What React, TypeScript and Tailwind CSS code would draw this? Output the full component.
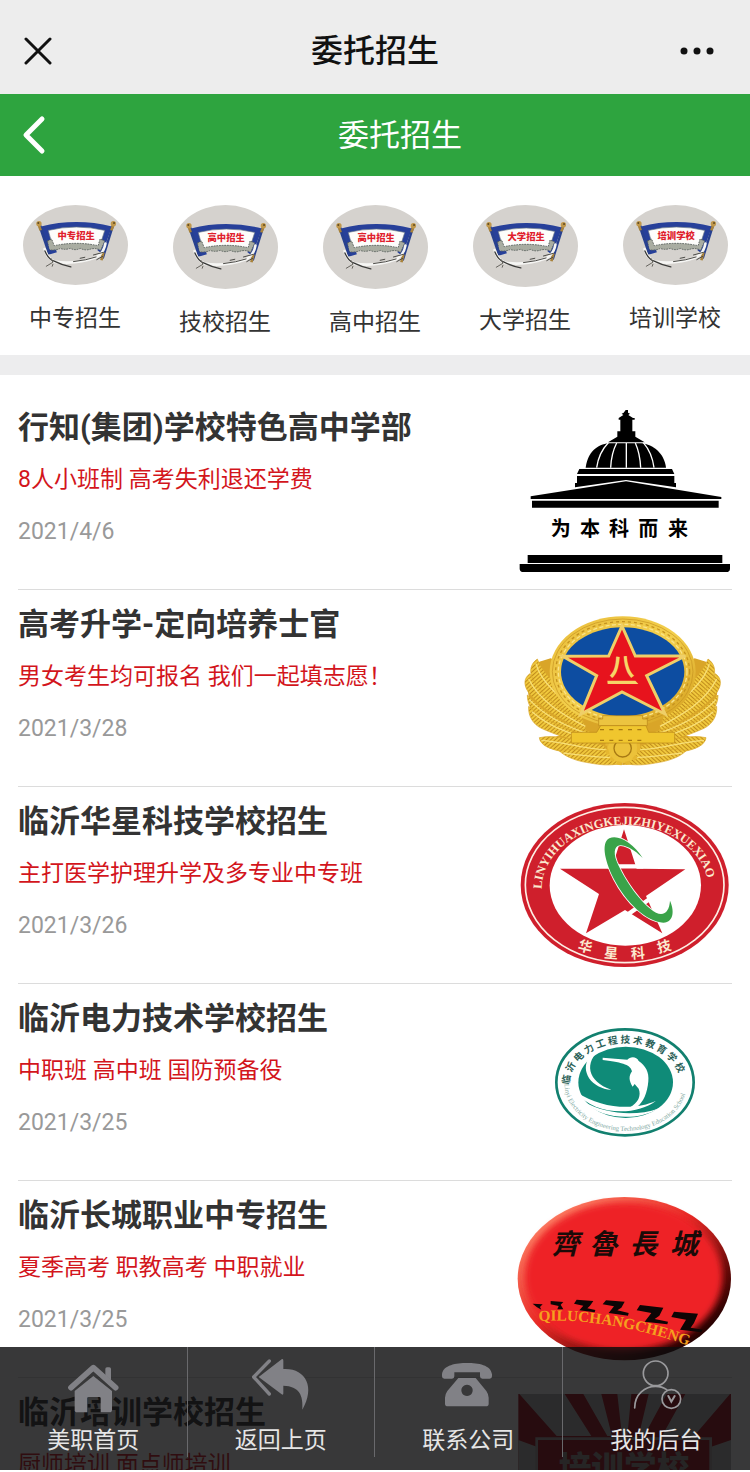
import type { ReactNode } from 'react'

interface Category {
  label: string
  banner: string
  size: string
}

interface School {
  title: string
  summary: string
  date: string
  picture: ReactNode
}

const categories: Category[] = [
  { label: '中专招生', banner: '中专招生', size: 'h-20' },
  { label: '技校招生', banner: '高中招生', size: 'h-[84px]' },
  { label: '高中招生', banner: '高中招生', size: 'h-[84px]' },
  { label: '大学招生', banner: '大学招生', size: 'h-[82px]' },
  { label: '培训学校', banner: '培训学校', size: 'h-20' },
]

const schools: School[] = [
  {
    title: '行知(集团)学校特色高中学部',
    summary: '8人小班制 高考失利退还学费',
    date: '2021/4/6',
    picture: <DomePicture />,
  },
  {
    title: '高考升学-定向培养士官',
    summary: '男女考生均可报名 我们一起填志愿！',
    date: '2021/3/28',
    picture: <EmblemPicture />,
  },
  {
    title: '临沂华星科技学校招生',
    summary: '主打医学护理升学及多专业中专班',
    date: '2021/3/26',
    picture: <HuaxingPicture />,
  },
  {
    title: '临沂电力技术学校招生',
    summary: '中职班 高中班 国防预备役',
    date: '2021/3/25',
    picture: <PowerPicture />,
  },
  {
    title: '临沂长城职业中专招生',
    summary: '夏季高考 职教高考 中职就业',
    date: '2021/3/25',
    picture: <GreatWallPicture />,
  },
  {
    title: '临沂培训学校招生',
    summary: '厨师培训 面点师培训',
    date: '2021/3/25',
    picture: <TrainingPicture />,
  },
]

const tabs = [
  { label: '美职首页', icon: <HomeIcon /> },
  { label: '返回上页', icon: <ReplyIcon /> },
  { label: '联系公司', icon: <PhoneIcon /> },
  { label: '我的后台', icon: <UserIcon /> },
]

function BannerIcon({ text }: { text: string }) {
  return (
    <svg className="h-20 w-[105px]" viewBox="68 44 316 240">
      {/* Ribbon */}
      <path d="M122 108 Q228 82 336 108 L306 190 L292 180 L310 126 Q228 102 146 126 L170 186 L150 192 Z" fill="#27409a" />
      <path d="M144 120 Q228 100 314 120 L298 170 Q228 152 158 170 Z" fill="#fdfdfb" stroke="#6d7a86" strokeWidth="2" />
      <path d="M142 152 l12 -6 l8 20 q66 -14 132 0 l6 -20 l14 6 l-12 28 q-14 -8 -30 -4 q-16 6 -32 -2 q-14 8 -30 0 q-16 6 -30 0 q-14 8 -34 4 Z" fill="#a9ada2" stroke="#5c6460" strokeWidth="3" strokeDasharray="5 3" />
      <text x="228" y="147" textAnchor="middle" fontSize="28" fontWeight="900" fill="#e0202c">
        {text}
      </text>
      {/* Poles */}
      <path d="M118 104 L148 192" stroke="#27408f" strokeWidth="9" />
      <path d="M339 104 L308 204" stroke="#27408f" strokeWidth="7" />
      <path d="M114 98 l7 22 M342 98 l-8 22 M310 186 l-6 24" stroke="#a8823b" strokeWidth="8" />
      <circle cx="116" cy="100" r="8" fill="#c0974b" />
      <circle cx="340" cy="100" r="8" fill="#c0974b" />
      <circle cx="114" cy="98" r="3" fill="#5f4a20" />
      <circle cx="342" cy="98" r="3" fill="#5f4a20" />
      {/* Ropes */}
      <g fill="none" strokeLinecap="round">
        <path d="M133 176 Q140 202 162 214 Q226 224 290 200 Q312 186 316 160" stroke="#f6f6f4" strokeWidth="8" />
        <path d="M134 182 Q144 206 160 212 Q184 224 212 230" stroke="#3c3c3a" strokeWidth="4" />
        <path d="M138 228 L158 216 L152 204 M158 222 L156 228" stroke="#66645e" strokeWidth="3" />
        <path d="M220 214 Q258 210 288 200 M240 204 l14 -3 M280 194 l30 -8 M290 208 l18 -10" stroke="#4b4a46" strokeWidth="3" />
      </g>
    </svg>
  )
}

function DomePicture() {
  return (
    <svg className="w-full" viewBox="51 57 645 492">
      <path d="M377 60 h7 v8 l6 3 l-5 4 l14 9 h5 v5 h-7 v35 h9 v16 l28 17 h-110 l28 -17 v-16 h9 v-35 h-5 v-5 l14 -9 l-5 -4 l6 -3 Z" />
      <path d="M257 233 C264 180 300 160 332 160 H424 C460 164 493 190 498 233 Z" />
      <path d="M325 158 Q296 188 290 233 M350 159 Q334 190 332 233 M379 159 V233 M406 159 Q420 190 422 233 M430 158 Q456 188 462 233" fill="none" stroke="#fff" strokeWidth="4" />
      <path d="M238 237 H516 L523 252 H231 Z M231 258 H523 V279 H528 V292 L378 270 L225 292 V279 H231 Z" />
      <path d="M92 319 L378 274 L664 321 V327 H92 Z M96 332 H656 V353 H96 Z" />
      <path d="M83 495 H667 V519 H83 Z M59 522 H690 V536 Q690 546 678 546 H71 Q59 546 59 536 Z" />
      <text x="152 240 327 415 504" y="438" fontSize="60" fontWeight="700">
        为本科而来
      </text>
    </svg>
  )
}

const wreathLeaves = [
  'M240 330 C190 290 130 240 112 192 C92 206 88 226 96 250 C130 310 190 350 250 380 Z',
  'M250 380 C190 350 120 300 90 236 C72 248 70 268 84 290 C120 340 190 380 260 410 Z',
  'M270 410 C190 390 130 350 82 300 C82 324 92 344 110 356 C170 390 220 410 280 430 Z',
  'M290 430 C210 410 140 380 86 334 C84 360 96 386 124 400 C180 425 230 440 300 450 Z',
  'M310 450 C240 440 170 416 118 428 C120 450 150 464 190 470 C240 484 280 484 330 478 Z',
  'M330 470 C280 460 220 462 176 466 C200 490 240 500 270 504 C300 510 330 512 360 506 Z',
]

const wreathVeins = [
  'M108 206 C120 260 190 320 250 356',
  'M86 252 C120 320 190 360 256 394',
  'M88 314 C130 360 200 396 274 420',
  'M96 350 C150 398 220 420 296 440',
  'M124 436 C190 440 250 462 320 464',
  'M190 474 C240 480 290 488 350 488',
]

function EmblemPicture() {
  return (
    <svg className="w-full" viewBox="51 33 645 492">
      <defs>
        <linearGradient id="gold" x1="0" y1="0" x2="1" y2="1">
          <stop offset="0" stopColor="#e9bd3c" />
          <stop offset="0.5" stopColor="#f3cf4c" />
          <stop offset="1" stopColor="#d29c1c" />
        </linearGradient>
        <pattern id="barbs" width="9" height="9" patternUnits="userSpaceOnUse" patternTransform="rotate(-42)">
          <rect width="9" height="9" fill="#f0c83c" />
          <rect width="9" height="3" fill="#c08c1c" />
        </pattern>
      </defs>
      {/* Wreath */}
      {['', 'translate(736 0) scale(-1 1)'].map((side) => (
        <g key={side} transform={side}>
          <path d="M152 190 L118 200 L92 240 L84 290 L92 350 L130 396 L190 416 L150 432 L190 466 L250 498 L368 510 V300 Z" fill="#d9a528" />
          <g fill="url(#barbs)" stroke="#dba92a" strokeWidth="2">
            {wreathLeaves.map((d) => (
              <path key={d} d={d} />
            ))}
          </g>
          <g fill="none" stroke="#f8df78" strokeWidth="4">
            {wreathVeins.map((d) => (
              <path key={d} d={d} />
            ))}
          </g>
        </g>
      ))}
      <ellipse cx="368" cy="230" rx="219" ry="166" fill="url(#gold)" />
      <g fill="none" stroke="#c5921f" strokeWidth="2">
        <ellipse cx="368" cy="230" rx="211" ry="158" />
        <ellipse cx="368" cy="230" rx="201" ry="150" strokeWidth="4" strokeDasharray="9 9" />
        <ellipse cx="368" cy="230" rx="193" ry="142" stroke="#f9e38a" strokeWidth="4" strokeDasharray="12 7" />
      </g>
      <ellipse cx="368" cy="230" rx="185" ry="133" fill="#0d4da1" />
      <path d="M366 93 L406 183 H556 L440 242 L495 357 L366 291 L243 357 L290 242 L188 184 L326 183 Z" fill="#e7131d" stroke="#efcf68" strokeWidth="9" />
      <text x="366" y="243" textAnchor="middle" fontSize="76" fontWeight="700" fill="#f6d568">
        八
      </text>
      <path d="M322 257 h84 l9 10 h-92 Z" fill="#f6d568" />
      {/* Gate and gear */}
      <circle cx="368" cy="458" r="46" fill="#ecc23a" />
      <circle cx="368" cy="458" r="48" fill="none" stroke="#e6b730" strokeWidth="10" strokeDasharray="14 12" />
      <circle cx="368" cy="460" r="26" fill="none" stroke="#a87a14" strokeWidth="4" />
      <path d="M308 362 H428 V372 H442 V392 H296 V372 H308 Z" fill="#ecc440" stroke="#b98518" strokeWidth="2" />
      <path d="M302 392 H438 L446 412 H524 V444 H214 V412 H290 Z" fill="#f0c62e" stroke="#b98518" strokeWidth="2" />
      <path d="M300 436 h140 M300 404 h140" stroke="#a87a14" strokeWidth="4" strokeDasharray="12 16" />
    </svg>
  )
}

function HuaxingPicture() {
  return (
    <svg className="w-full" viewBox="51 39 645 492">
      <defs>
        <path id="huaxing-arc" d="M125 297 A250 193 0 0 1 625 297" />
      </defs>
      <ellipse cx="374" cy="285" rx="312" ry="246" fill="#cf1f2c" />
      <ellipse cx="374" cy="285" rx="298" ry="233" fill="none" stroke="#fdeee4" strokeWidth="5" />
      <ellipse cx="376" cy="286" rx="227" ry="181" fill="#fff" />
      <text fontFamily="Liberation Serif, serif" fontSize="37" fontWeight="700" fill="#fbe9cf">
        <textPath href="#huaxing-arc">LINYIHUAXINGKEJIZHIYEXUEXIAO</textPath>
      </text>
      <g fontSize="42" fontWeight="700" fill="#fbe9cf" textAnchor="middle">
        <text transform="translate(252 484) rotate(14)">华</text>
        <text transform="translate(332 504) rotate(5)">星</text>
        <text transform="translate(415 505) rotate(-4)">科</text>
        <text transform="translate(496 484) rotate(-14)">技</text>
      </g>
      <path d="M372 118 L410 236 L556 238 L438 318 L487 430 L375 360 L258 430 L297 312 L180 236 H335 Z" fill="#cf1f2c" />
      <path d="M340 229 H430 M380 376 L450 326" stroke="#fff" strokeWidth="13" />
      <path
        d="M428 204 C400 160 355 132 328 145 C300 160 318 222 342 268 C378 338 440 396 490 398 C524 396 522 358 510 332 C508 362 494 380 468 368 C424 344 372 268 350 214 C336 176 350 160 372 167 C394 173 412 188 428 204 Z"
        fill="#3aa349"
        stroke="#fff"
        strokeWidth="5"
        paintOrder="stroke"
      />
    </svg>
  )
}

function PowerPicture() {
  return (
    <svg className="w-full" viewBox="-39 -30 645 492">
      <defs>
        <path id="power-top" d="M118 224 A167 125 0 0 1 452 224" />
        <path id="power-bottom" d="M104 222 A182 140 0 0 0 470 222" />
      </defs>
      <ellipse cx="285" cy="217" rx="206" ry="159" fill="#fff" stroke="#12806f" strokeWidth="8" />
      <ellipse cx="287" cy="217" rx="142" ry="107" fill="#0f8b78" />
      <text fontSize="29" fontWeight="700" fill="#2b5f57">
        <textPath href="#power-top">临 沂 电 力 工 程 技 术 教 育 学 校</textPath>
      </text>
      <text fontFamily="Liberation Serif, serif" fontSize="20" fill="#83aaa3">
        <textPath href="#power-bottom">Linyi Electricity Engineering Technology Education School</textPath>
      </text>
      <g fill="#fff">
        <path d="M214 116 C160 156 172 214 244 239 C186 236 148 184 178 140 C186 126 198 118 214 116 Z" />
        <path d="M140 246 C190 318 322 318 378 272 C320 300 218 300 140 246 Z" />
        <path d="M160 274 C220 334 330 330 384 296 C322 318 230 316 160 274 Z" />
        <path d="M218 143 L292 149 C300 139 320 138 326 153 C346 166 358 186 355 214 C352 250 340 276 322 290 L298 293 C326 278 334 256 326 236 L314 222 L308 230 C296 212 296 198 306 184 C302 166 284 158 218 150 Z" />
      </g>
    </svg>
  )
}

function GreatWallPicture() {
  return (
    <svg className="w-full" viewBox="51 36 645 492">
      <defs>
        <linearGradient id="badge-rim" x1="0.1" y1="0.1" x2="0.85" y2="0.9">
          <stop offset="0" stopColor="#ff8a6c" />
          <stop offset="0.45" stopColor="#e82a26" />
          <stop offset="0.8" stopColor="#5c0806" />
          <stop offset="1" stopColor="#1c0000" />
        </linearGradient>
        <filter id="badge-soft" x="-10%" y="-10%" width="120%" height="120%">
          <feGaussianBlur stdDeviation="9" />
        </filter>
        <path id="badge-arc" d="M116 408 C240 400 400 424 566 482" />
      </defs>
      <ellipse cx="373" cy="281" rx="320" ry="245" fill="url(#badge-rim)" />
      <ellipse cx="371" cy="275" rx="296" ry="222" fill="#ee2427" filter="url(#badge-soft)" />
      <text x="154 268 388 510" y="208" fontSize="84" fontWeight="700" fontStyle="italic" fill="#1a0a08">
        齊魯長城
      </text>
      {/* Wall battlements */}
      <g fill="#0d0505">
        <path d="M98 356 l30 2 l-8 8 l4 8 l-14 -8 Z" />
        <path d="M152 348 l38 3 l-8 8 l8 14 h-18 l4 -10 l-24 -5 Z" />
        <path d="M230 344 l50 4 l-10 14 l-8 8 l24 5 l-2 7 l-46 -6 l12 -14 l-28 -6 Z" />
        <path d="M318 346 l56 4 l-10 18 l-12 8 l34 8 l-2 8 l-58 -8 l16 -20 l-34 -6 Z" />
        <path d="M420 360 l70 8 l-12 24 l-14 10 l40 8 l-2 8 l-68 -8 l20 -26 l-44 -8 Z" />
        <path d="M522 380 l72 6 l-12 28 l-10 14 l36 6 l-4 8 l-64 -8 l18 -30 l-44 -8 Z" />
      </g>
      <text fontFamily="Liberation Serif, serif" fontSize="46" fontWeight="700" fill="#f5a01e">
        <textPath href="#badge-arc">QILUCHANGCHENG</textPath>
      </text>
    </svg>
  )
}

function TrainingPicture() {
  return (
    <svg className="w-full" viewBox="441 192 645 492">
      <rect x="445" y="192" width="638" height="492" fill="#a00c1a" />
      <path d="M448 192 H584 L664 318 H560 Z M640 192 H694 L726 318 H712 Z M742 192 H784 L772 318 H756 Z M836 192 H890 L822 318 H806 Z M946 192 H1080 L972 318 H876 Z M445 330 L500 350 V420 H445 Z M1083 330 L1024 350 V420 H1083 Z" fill="#b9b9b4" />
      <path d="M500 470 V326 H1022 V470" fill="#a00c1a" stroke="#a9a3a0" strokeWidth="8" />
      <text x="762" y="450" textAnchor="middle" fontSize="98" fontWeight="900" fill="#9a948f">
        培训学校
      </text>
    </svg>
  )
}

function HomeIcon() {
  return (
    <svg className="h-[50px] w-[60px]" viewBox="189 98 180 150" fill="#818186">
      <path d="M280 137 L336 182 V238 Q336 246 328 246 H302 V204 Q302 200 298 200 H266 Q262 200 262 204 V246 H232 Q224 246 224 238 V182 Z" />
      <path d="M213 172 L280 112 L347 172" fill="none" stroke="#818186" strokeWidth="17" strokeLinecap="round" strokeLinejoin="round" />
      <path d="M316 116 Q316 111 321 111 H328 Q333 111 333 116 V150 L316 135 Z" />
    </svg>
  )
}

function ReplyIcon() {
  return (
    <svg className="h-[50px] w-[60px] overflow-visible" viewBox="753 98 180 150" fill="#818186">
      <path d="M808 92 L761 140 L808 191" fill="none" stroke="#818186" strokeWidth="10" strokeLinecap="round" strokeLinejoin="round" />
      <path d="M776 140 L845 87 Q850 84 850 91 V116 C915 112 948 168 907 238 C910 194 898 168 850 166 V189 Q850 196 845 192 Z" />
    </svg>
  )
}

function PhoneIcon() {
  return (
    <svg className="h-[50px] w-[60px]" viewBox="207 98 180 150" fill="#818186">
      <path d="M219 132 C222 104 262 98 294 98 C328 98 366 104 369 132 V138 Q369 145 362 145 H340 Q333 145 333 138 V126 H256 V138 Q256 145 249 145 H226 Q219 145 219 138 Z" />
      <path fillRule="evenodd" d="M268 143 H320 L352 182 Q359 192 359 202 V220 Q359 228 350 228 H237 Q228 228 228 220 V202 Q228 192 235 182 Z M294 163 a17 17 0 1 0 0.1 0 Z" />
    </svg>
  )
}

function UserIcon() {
  return (
    <svg className="h-[50px] w-[60px] overflow-visible" viewBox="768 98 180 150" fill="none" stroke="#9a9a9d" strokeWidth="5" strokeLinecap="round">
      <circle cx="857" cy="129" r="37" />
      <path d="M794 233 C794 190 826 168 857 168 Q876 168 890 178" />
      <circle cx="904" cy="206" r="28" />
      <path d="M895 197 L904 214 L914 197" strokeWidth="6" />
    </svg>
  )
}

export default function App() {
  return (
    <div className="relative flex h-screen flex-col overflow-hidden bg-white font-['Roboto','Noto_Sans_CJK_SC',sans-serif] text-[23px] text-[#333]">
      {/* Title bar */}
      <header className="flex h-[94px] shrink-0 items-center justify-between bg-[#ededed] px-6 pt-2 text-[#111]">
        <button type="button" aria-label="关闭" className="flex w-9">
          <svg className="h-7 w-7" viewBox="0 0 28 28" fill="none" stroke="currentColor" strokeWidth="3" strokeLinecap="round">
            <path d="M2 2 L26 26 M26 2 L2 26" />
          </svg>
        </button>
        <h1 className="text-[32px] leading-10 font-medium">委托招生</h1>
        <button type="button" aria-label="更多" className="flex w-9 justify-end pr-3">
          <svg className="h-2 w-[34px] shrink-0" viewBox="0 0 34 8" fill="currentColor">
            <circle cx="4" cy="4" r="3.5" />
            <circle cx="17" cy="4" r="3.5" />
            <circle cx="30" cy="4" r="3.5" />
          </svg>
        </button>
      </header>

      <div className="flex h-[82px] shrink-0 items-center bg-[#2ea43f] text-white">
        <button type="button" aria-label="返回" className="flex w-[50px] justify-end pr-1">
          <svg className="h-10 w-6" viewBox="0 0 24 40" fill="none" stroke="currentColor" strokeWidth="5" strokeLinecap="round" strokeLinejoin="round">
            <path d="M20 4 L4 20 L20 36" />
          </svg>
        </button>
        <h2 className="flex-1 pt-0.5 text-center text-[31px] leading-10">委托招生</h2>
      </div>

      <main className="flex-1 overflow-y-auto [scrollbar-width:none]">
        {/* Categories */}
        <nav className="grid grid-cols-5 border-b-[20px] border-[#ededee] pt-[29px] pb-4">
          {categories.map((category) => (
            <a key={category.label} href="#" className="flex flex-col items-center gap-[18px]">
              <span className={`flex w-[105px] items-center justify-center overflow-hidden rounded-[50%] bg-[#d5d2ce] ${category.size}`}>
                <BannerIcon text={category.banner} />
              </span>
              <span className="leading-8">{category.label}</span>
            </a>
          ))}
        </nav>

        {/* School list */}
        <ul className="px-[18px] pt-[18px]">
          {schools.map((school) => (
            <li key={school.title} className="border-b border-[#dcdcdc]">
              <a href="#" className="flex justify-between py-4">
                <div className="flex flex-col gap-[18px] pt-0.5 leading-[34px]">
                  <h3 className="text-[31px] font-bold">{school.title}</h3>
                  <p className="text-[#d3151c]">{school.summary}</p>
                  <time className="text-[#999]">{school.date}</time>
                </div>
                <div className="h-[164px] w-[215px] shrink-0">{school.picture}</div>
              </a>
            </li>
          ))}
        </ul>
      </main>

      {/* Bottom tabs, the list shows through */}
      <footer className="absolute inset-x-0 bottom-0 border-b-2 border-white bg-[rgba(12,12,14,0.82)] bg-clip-padding pb-[13px] text-[#e6e6e6]">
        <nav className="grid grid-cols-4 divide-x divide-[#69696c]">
          {tabs.map((tab) => (
            <a key={tab.label} href="#" className="flex flex-col items-center gap-3 pt-4">
              {tab.icon}
              <span className="leading-8">{tab.label}</span>
            </a>
          ))}
        </nav>
      </footer>
    </div>
  )
}
